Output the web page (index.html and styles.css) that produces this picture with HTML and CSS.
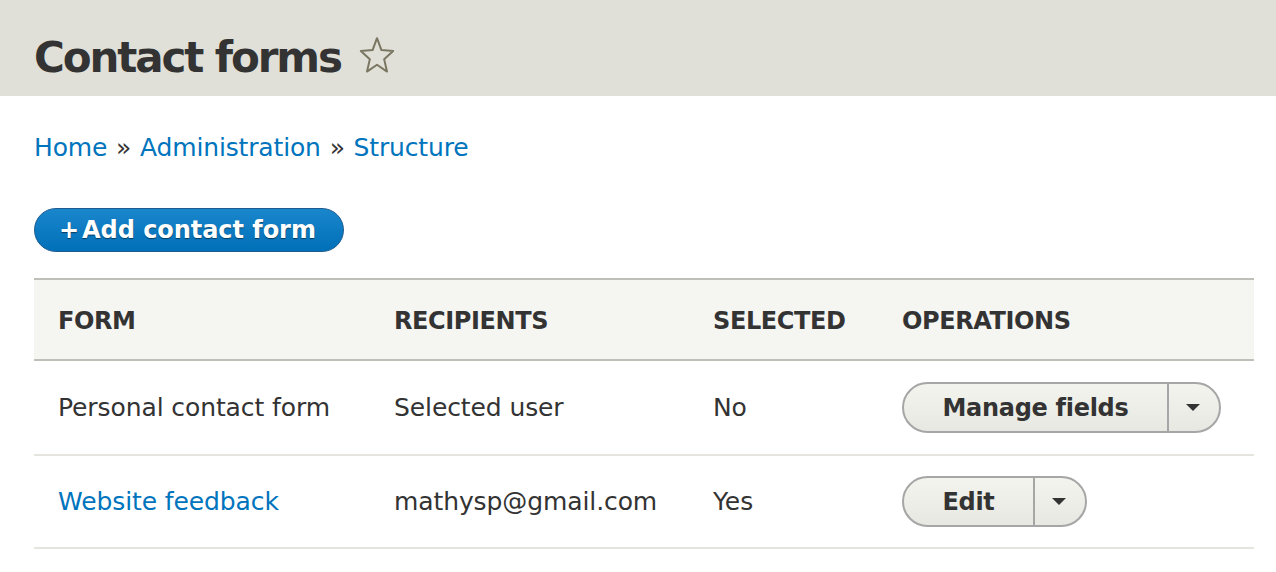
FILE: index.html
```html
<!DOCTYPE html>
<html>
<head>
<meta charset="utf-8">
<link rel="stylesheet" href="styles.css">
</head>
<body>
<header class="page-header">
  <h1 class="page-title">Contact forms</h1>
  <svg class="star" viewBox="0 0 36 35" width="36" height="38" preserveAspectRatio="none" aria-hidden="true">
    <path d="M18 2 L22.41 12.93 L34.17 13.75 L25.13 21.32 L28 32.75 L18 26.5 L8 32.75 L10.87 21.32 L1.83 13.75 L13.59 12.93 Z" fill="none" stroke="#7a7662" stroke-width="2" stroke-linejoin="round" vector-effect="non-scaling-stroke"/>
  </svg>
</header>
<main class="content">
  <nav class="breadcrumb">
    <a href="#">Home</a> <span class="sep">»</span> <a href="#">Administration</a> <span class="sep">»</span> <a href="#">Structure</a>
  </nav>
  <div class="actions">
    <a class="button-action" href="#"><span class="plus">+</span>Add contact form</a>
  </div>
  <table class="list">
    <thead>
      <tr>
        <th class="c1">Form</th>
        <th class="c2">Recipients</th>
        <th class="c3">Selected</th>
        <th class="c4">Operations</th>
      </tr>
    </thead>
    <tbody>
      <tr>
        <td>Personal contact form</td>
        <td>Selected user</td>
        <td>No</td>
        <td>
          <div class="dropbutton wide">
            <span class="db-main">Manage fields</span>
            <span class="db-toggle"><span class="caret"></span></span>
          </div>
        </td>
      </tr>
      <tr>
        <td><a href="#">Website feedback</a></td>
        <td>mathysp@gmail.com</td>
        <td>Yes</td>
        <td>
          <div class="dropbutton">
            <span class="db-main">Edit</span>
            <span class="db-toggle"><span class="caret"></span></span>
          </div>
        </td>
      </tr>
    </tbody>
  </table>
</main>
</body>
</html>
```
FILE: styles.css
```css
html, body {
  margin: 0;
  padding: 0;
  background: #ffffff;
}
body {
  font-family: "DejaVu Sans", "Lucida Grande", sans-serif;
  font-size: 25px;
  letter-spacing: -0.1px;
  color: #333333;
}
a {
  color: #0074bd;
  text-decoration: none;
}
.page-header {
  background: #e0e0d8;
  height: 96px;
  display: flex;
  align-items: flex-start;
  padding: 37px 34px 0;
  box-sizing: border-box;
}
.page-title {
  margin: 0;
  font-size: 42px;
  font-weight: bold;
  color: #333333;
  line-height: 1;
  letter-spacing: -2.1px;
}
.star {
  margin-left: 18px;
  margin-top: -1px;
}
.content {
  padding: 0 22px 0 34px;
}
.breadcrumb {
  margin-top: 36px;
  line-height: 32px;
  font-size: 25px;
  letter-spacing: -0.15px;
  color: #333;
}
.breadcrumb .sep {
  color: #333;
  margin: 0 1px;
}
.actions {
  margin-top: 44px;
  height: 44px;
}
.button-action {
  display: inline-flex;
  align-items: center;
  box-sizing: border-box;
  height: 44px;
  padding: 0 27px 0 24px;
  border: 1px solid #1e5c90;
  border-radius: 22px;
  background: linear-gradient(#1a86cc, #0070b8);
  color: #ffffff;
  font-weight: bold;
  font-size: 24px;
  letter-spacing: -0.05px;
  text-shadow: 0 1px 1px rgba(0,0,0,0.5);
}
.plus {
  margin-right: 3px;
}
.list {
  margin-top: 26px;
  width: 100%;
  border-collapse: collapse;
}
.list thead tr {
  background: #f5f5f2;
  border-top: 2px solid #bfbfba;
  border-bottom: 2px solid #bfbfba;
}
.list th {
  height: 77px;
  text-align: left;
  text-transform: uppercase;
  font-weight: bold;
  font-size: 24px;
  letter-spacing: -0.4px;
  padding: 2px 0 0 24px;
  color: #333;
}
.list td {
  padding: 0 0 0 24px;
  height: 91px;
  border-bottom: 2px solid #e6e4df;
}
.list tbody tr:first-child td {
  height: 93px;
}
.c1 { width: 312px; }
.c2 { width: 295px; }
.c3 { width: 165px; }
.dropbutton {
  display: inline-flex;
  height: 51px;
  box-sizing: border-box;
  border: 2px solid #a6a6a6;
  border-radius: 26px;
  background: linear-gradient(#f3f4ee, #e8e8e2);
  vertical-align: middle;
}
.db-main {
  display: flex;
  align-items: center;
  justify-content: center;
  font-weight: bold;
  font-size: 24px;
  letter-spacing: -0.3px;
  color: #333;
  width: 129px;
  border-right: 2px solid #a6a6a6;
}
.dropbutton.wide .db-main {
  width: 263px;
}
.db-toggle {
  width: 50px;
  display: flex;
  align-items: center;
  justify-content: center;
}
.caret {
  width: 0;
  height: 0;
  border-left: 7px solid transparent;
  border-right: 7px solid transparent;
  border-top: 7px solid #333;
  margin-right: 2px;
}
```
